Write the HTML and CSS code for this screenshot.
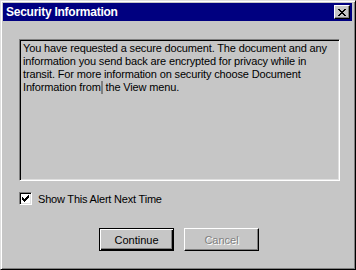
FILE: index.html
```html
<!DOCTYPE html>
<html>
<head>
<meta charset="utf-8">
<link rel="stylesheet" href="styles.css">
</head>
<body>
<div class="window">
  <div class="titlebar">
    <span class="title">Security Information</span>
    <span class="close"><svg width="8" height="7" viewBox="0 0 8 7"><path d="M0 0h2v1h1v1h2v-1h1v-1h2v1h-1v1h-1v1h-1v1h1v1h1v1h1v1h-2v-1h-1v-1h-2v1h-1v1h-2v-1h1v-1h1v-1h1v-1h-1v-1h-1v-1h-1z" fill="#000"/></svg></span>
  </div>
  <div class="body">
    <div class="message">You have requested a secure document. The document and any information you send back are encrypted for privacy while in transit. For more information on security choose Document Information from<span class="caret"></span> the View menu.</div>
    <label class="check"><span class="box"><svg width="7" height="7" viewBox="0 0 7 7"><path d="M6 0v1h-1v1h-1v1h-1v1h-1v-1h-1v-1h-1v3h1v1h1v1h1v-1h1v-1h1v-1h1v-1h1v-3z" fill="#000"/></svg></span><span class="label">Show This Alert Next Time</span></label>
    <div class="buttons">
      <div class="btn default"><span>Continue</span></div>
      <div class="btn disabled"><span>Cancel</span></div>
    </div>
  </div>
</div>
</body>
</html>
```
FILE: styles.css
```css
html, body { margin: 0; padding: 0; }
body { width: 356px; height: 270px; overflow: hidden; font-family: "Liberation Sans", Arial, sans-serif; font-size: 11px; color: #000; }
.window {
  width: 356px; height: 270px; box-sizing: border-box;
  background: #c6c6c6;
  border-top: 1px solid #dfdfdf; border-left: 1px solid #dfdfdf;
  border-right: 1px solid #000; border-bottom: 1px solid #000;
  box-shadow: inset 1px 1px #fff, inset -1px -1px #808080;
  padding: 2px 3px 3px 2px;
  display: flex; flex-direction: column;
}
.titlebar {
  height: 18px; background: #000080; color: #fff;
  display: flex; align-items: center; justify-content: space-between;
  padding: 0 2px 0 3px;
}
.title { font-weight: bold; font-size: 12px; letter-spacing: -0.25px; }
.close {
  width: 16px; height: 14px; box-sizing: border-box; background: #c6c6c6;
  border-top: 1px solid #fff; border-left: 1px solid #fff;
  border-right: 1px solid #000; border-bottom: 1px solid #000;
  box-shadow: inset -1px -1px #808080;
  display: flex; align-items: center; justify-content: center;
  padding-right: 1px;
}
.close svg { display: block; }
.body { padding: 18px 0 0 16px; display: flex; flex-direction: column; }
.message {
  width: 321px; height: 142px; box-sizing: border-box;
  border-top: 1px solid #808080; border-left: 1px solid #808080;
  border-right: 1px solid #fff; border-bottom: 1px solid #fff;
  box-shadow: inset 1px 1px #000, inset -1px -1px #dfdfdf;
  padding: 2px 3px 0 3px; line-height: 13px; letter-spacing: -0.15px;
}
.caret { display: inline-block; width: 2px; height: 13px; background: #808080; vertical-align: top; }
.check { display: flex; align-items: center; margin-top: 11px; height: 13px; }
.box {
  width: 13px; height: 13px; box-sizing: border-box; background: #fff;
  border-top: 1px solid #808080; border-left: 1px solid #808080;
  border-right: 1px solid #fff; border-bottom: 1px solid #fff;
  box-shadow: inset 1px 1px #000, inset -1px -1px #dfdfdf;
  display: flex; align-items: center; justify-content: center;
}
.box svg { display: block; }
.label { margin-left: 6px; letter-spacing: -0.2px; }
.buttons { display: flex; gap: 10px; margin-top: 23px; padding-left: 80px; }
.btn {
  width: 75px; height: 23px; box-sizing: border-box;
  display: flex; align-items: center; justify-content: center;
  background: #c6c6c6;
}
.btn.default {
  border: 1px solid #000;
  box-shadow: inset 1px 1px #fff, inset -1px -1px #000, inset -2px -2px #808080;
}
.btn.disabled {
  border-top: 1px solid #fff; border-left: 1px solid #fff;
  border-right: 1px solid #000; border-bottom: 1px solid #000;
  box-shadow: inset -1px -1px #808080;
  color: #808080; text-shadow: 1px 1px #fff;
}
```
